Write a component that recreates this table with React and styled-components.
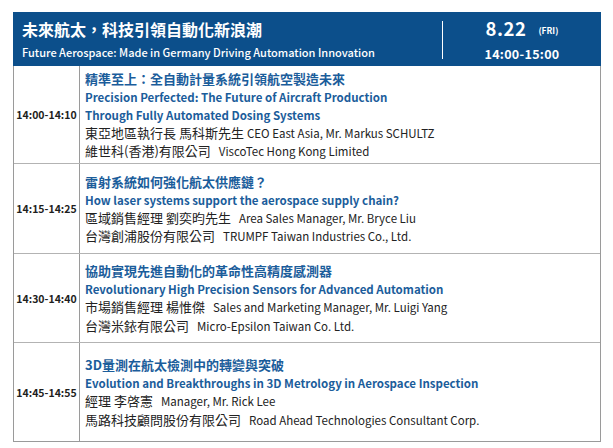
import React from 'react'
import styled, { createGlobalStyle } from 'styled-components'

const sessions = [
  {
    time: '14:00-14:10',
    height: 98,
    zh: '精準至上：全自動計量系統引領航空製造未來',
    en: ['Precision Perfected: The Future of Aircraft Production', 'Through Fully Automated Dosing Systems'],
    speakerZh: '東亞地區執行長 馬科斯先生',
    speakerEn: 'CEO East Asia, Mr. Markus SCHULTZ',
    speakerGap: 3,
    companyZh: '維世科(香港)有限公司',
    companyEn: 'ViscoTec Hong Kong Limited',
  },
  {
    time: '14:15-14:25',
    height: 90,
    zh: '雷射系統如何強化航太供應鏈？',
    en: ['How laser systems support the aerospace supply chain?'],
    speakerZh: '區域銷售經理 劉奕昀先生',
    speakerEn: 'Area Sales Manager, Mr. Bryce Liu',
    speakerGap: 8,
    companyZh: '台灣創浦股份有限公司',
    companyEn: 'TRUMPF Taiwan Industries Co., Ltd.',
  },
  {
    time: '14:30-14:40',
    height: 89,
    zh: '協助實現先進自動化的革命性高精度感測器',
    en: ['Revolutionary High Precision Sensors for Advanced Automation'],
    speakerZh: '市場銷售經理 楊惟傑',
    speakerEn: 'Sales and Marketing Manager, Mr. Luigi Yang',
    speakerGap: 8,
    companyZh: '台灣米銥有限公司',
    companyEn: 'Micro-Epsilon Taiwan Co. Ltd.',
  },
  {
    time: '14:45-14:55',
    height: 98,
    zh: '3D量測在航太檢測中的轉變與突破',
    en: ['Evolution and Breakthroughs in 3D Metrology in Aerospace Inspection'],
    speakerZh: '經理 李啓憲',
    speakerEn: 'Manager, Mr. Rick Lee',
    speakerGap: 8,
    companyZh: '馬路科技顧問股份有限公司',
    companyEn: 'Road Ahead Technologies Consultant Corp.',
  },
]

function App() {
  return (
    <>
      <GlobalStyle />
      <Page>
        <Header>
          <HeadMain>
            <HeadTitle>未來航太，科技引領自動化新浪潮</HeadTitle>
            <HeadSub>Future Aerospace: Made in Germany Driving Automation Innovation</HeadSub>
          </HeadMain>
          <Divider />
          <DateBlock>
            <DateLine>
              8.22<Day>(FRI)</Day>
            </DateLine>
            <TimeRange>14:00-15:00</TimeRange>
          </DateBlock>
        </Header>
        <Table>
          {sessions.map((s) => (
            <Row key={s.time} $h={s.height}>
              <TimeCell>{s.time}</TimeCell>
              <InfoCell>
                <TopicZh>{s.zh}</TopicZh>
                {s.en.map((line) => (
                  <TopicEn key={line}>{line}</TopicEn>
                ))}
                <Line>
                  {s.speakerZh}
                  <En $gap={s.speakerGap}>{s.speakerEn}</En>
                </Line>
                <Line>
                  {s.companyZh}
                  <En $gap={8}>{s.companyEn}</En>
                </Line>
              </InfoCell>
            </Row>
          ))}
        </Table>
      </Page>
    </>
  )
}

export default App

const GlobalStyle = createGlobalStyle`
  body {
    margin: 0;
    background: #ffffff;
    font-family: "Noto Sans CJK TC", "Noto Sans", sans-serif;
  }
`

const Page = styled.div`
  width: 588px;
  padding: 12px 0 0 13px;
`

const Header = styled.div`
  height: 54px;
  background-color: #0c4f8b;
  display: flex;
  align-items: center;
  color: #ffffff;
  padding: 0 0 0 9px;
  box-sizing: border-box;
`

const HeadMain = styled.div`
  flex: 1;
  display: flex;
  flex-direction: column;
`

const HeadTitle = styled.div`
  font-size: 16px;
  font-weight: 700;
  line-height: 22px;
`

const HeadSub = styled.div`
  font-size: 11px;
  font-weight: 500;
  line-height: 16px;
  margin-top: 4px;
`

const Divider = styled.div`
  width: 1.5px;
  height: 38px;
  background: #ffffff;
  margin-top: 2px;
`

const DateBlock = styled.div`
  width: 158px;
  display: flex;
  flex-direction: column;
  align-items: center;
  font-weight: 700;
`

const DateLine = styled.div`
  font-size: 18.5px;
  line-height: 22px;
  display: flex;
  align-items: baseline;
  letter-spacing: 0.5px;
`

const Day = styled.span`
  font-size: 8.5px;
  margin-left: 12px;
  letter-spacing: 0;
  position: relative;
  top: -2px;
`

const TimeRange = styled.div`
  font-size: 12.5px;
  line-height: 16px;
  margin-top: 3px;
  letter-spacing: 0.3px;
`

const Table = styled.div`
  border: 1px solid #9a9a9a;
  border-top: none;
`

const Row = styled.div`
  display: flex;
  height: ${(p) => p.$h}px;
  box-sizing: border-box;
  border-bottom: 1.5px solid #b3b3b3;

  &:last-child {
    border-bottom: none;
  }
`

const TimeCell = styled.div`
  width: 65px;
  flex-shrink: 0;
  border-right: 1px solid #9a9a9a;
  display: flex;
  align-items: center;
  justify-content: center;
  font-size: 10.5px;
  font-weight: 700;
  color: #1e1e1e;
`

const InfoCell = styled.div`
  flex: 1;
  display: flex;
  flex-direction: column;
  justify-content: center;
  padding-left: 5px;
`

const TopicZh = styled.div`
  font-size: 13px;
  font-weight: 700;
  color: #1b5d9b;
  line-height: 19px;
`

const TopicEn = styled.div`
  font-size: 11.5px;
  font-weight: 700;
  color: #1b5d9b;
  line-height: 18px;
`

const Line = styled.div`
  font-size: 13px;
  color: #222222;
  line-height: 18.5px;
`

const En = styled.span`
  font-size: 11.5px;
  margin-left: ${(p) => p.$gap}px;
`
